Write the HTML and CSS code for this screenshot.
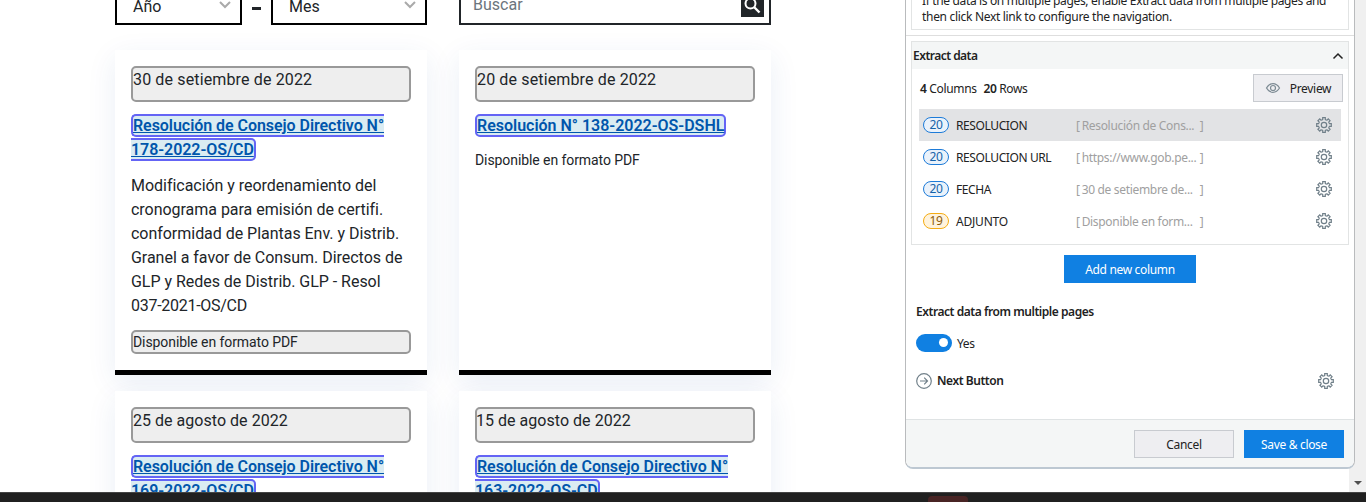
FILE: index.html
```html
<!DOCTYPE html>
<html lang="es">
<head>
<meta charset="utf-8">
<title>Resoluciones</title>
<link rel="stylesheet" href="styles.css">
</head>
<body>
<svg class="defs" width="0" height="0">
  <defs><path id="tooth" d="M5.170-2.140L5.450-1.300H7.300V1.300H5.450L5.170 2.140" fill="none" stroke="currentColor" stroke-width="1.200"/></defs>
  <symbol id="gear" viewBox="-8 -8 16 16">
    <use href="#tooth"/><use href="#tooth" transform="rotate(45)"/><use href="#tooth" transform="rotate(90)"/><use href="#tooth" transform="rotate(135)"/>
    <use href="#tooth" transform="rotate(180)"/><use href="#tooth" transform="rotate(225)"/><use href="#tooth" transform="rotate(270)"/><use href="#tooth" transform="rotate(315)"/>
    <circle r="2.700" fill="none" stroke="currentColor" stroke-width="1.200"/>
  </symbol>
</svg>
<div class="screen">
  <main class="page">
    <div class="filters">
      <div class="select year"><span>Año</span><svg width="12" height="8" viewBox="0 0 12 8"><path d="M1 1l5 5 5-5" fill="none" stroke="#aaa" stroke-width="2"/></svg></div>
      <div class="dash"></div>
      <div class="select month"><span>Mes</span><svg width="12" height="8" viewBox="0 0 12 8"><path d="M1 1l5 5 5-5" fill="none" stroke="#aaa" stroke-width="2"/></svg></div>
      <div class="search"><span>Buscar</span><div class="go"><svg width="23" height="23" viewBox="0 0 23 23"><circle cx="9.500" cy="9.500" r="5" fill="none" stroke="#fff" stroke-width="2"/><path d="M13 13l5.500 5.500" stroke="#fff" stroke-width="2.400"/></svg></div></div>
    </div>
    <div class="cards">
      <article class="card">
        <div class="date">30 de setiembre de 2022</div>
        <h3><a>Resolución de Consejo Directivo N° <br>178-2022-OS/CD</a></h3>
        <p>Modificación y reordenamiento del<br>cronograma para emisión de certifi.<br>conformidad de Plantas Env. y Distrib.<br>Granel a favor de Consum. Directos de<br>GLP y Redes de Distrib. GLP - Resol<br><span class="tight">037-2021-OS/CD</span></p>
        <div class="pdf boxed">Disponible en formato PDF</div>
      </article>
      <article class="card">
        <div class="date">20 de setiembre de 2022</div>
        <h3><a class="wide">Resolución N° 138-2022-OS-DSHL</a></h3>
        <div class="pdf">Disponible en formato PDF</div>
      </article>
      <article class="card">
        <div class="date short">25 de agosto de 2022</div>
        <h3><a>Resolución de Consejo Directivo N° <br>169-2022-OS/CD</a></h3>
      </article>
      <article class="card">
        <div class="date short lead">15 de agosto de 2022</div>
        <h3><a>Resolución de Consejo Directivo N° <br>163-2022-OS-CD</a></h3>
      </article>
    </div>
  </main>
  <div class="scrollbar"><span class="down"></span></div>
  <footer class="taskbar"><span class="tab"></span></footer>
  <section class="panel">
    <div class="body">
      <div class="hint"><div class="h1">If the data is on multiple pages, enable Extract data from multiple pages and</div><div class="h2">then click Next link to configure the navigation.</div></div>
      <div class="extract">
        <header><b>Extract data</b><svg width="12" height="8" viewBox="0 0 12 8"><path d="M1.500 6.500L6 2l4.500 4.500" fill="none" stroke="#222" stroke-width="1.500"/></svg></header>
        <div class="summary"><span class="counts"><b>4</b> Columns <b class="rows">20</b> Rows</span>
          <button class="btn preview"><svg width="16" height="12" viewBox="0 0 16 12"><path d="M1.500 6C5 .2 11 .2 14.500 6 11 11.800 5 11.800 1.500 6z" fill="none" stroke="#7d8b94" stroke-width="1.200"/><circle cx="8" cy="6" r="2.500" fill="none" stroke="#7d8b94" stroke-width="1.200"/></svg><span>Preview</span></button></div>
        <div class="row on"><span class="badge">20</span><span class="name">RESOLUCION</span><span class="val"><i>[</i><em>Resolución de Cons...</em><i>]</i></span><svg class="gear"><use href="#gear"/></svg></div>
        <div class="row"><span class="badge">20</span><span class="name">RESOLUCION URL</span><span class="val"><i>[</i><em>https://www.gob.pe...</em><i>]</i></span><svg class="gear"><use href="#gear"/></svg></div>
        <div class="row"><span class="badge">20</span><span class="name">FECHA</span><span class="val"><i>[</i><em>30 de setiembre de...</em><i>]</i></span><svg class="gear"><use href="#gear"/></svg></div>
        <div class="row"><span class="badge warn">19</span><span class="name adj">ADJUNTO</span><span class="val"><i>[</i><em>Disponible en form...</em><i>]</i></span><svg class="gear"><use href="#gear"/></svg></div>
      </div>
      <button class="btn blue add"><span>Add new column</span></button>
      <b class="multi">Extract data from multiple pages</b>
      <div class="toggle"><span class="switch"></span><span class="yes">Yes</span></div>
      <div class="next"><svg width="16" height="16" viewBox="0 0 16 16"><circle cx="8" cy="8" r="7.300" fill="none" stroke="#71808a" stroke-width="1.200"/><path d="M4 8h7.500M8.200 4.700L11.500 8l-3.300 3.300" fill="none" stroke="#71808a" stroke-width="1.200"/></svg><b>Next Button</b><svg class="gear"><use href="#gear"/></svg></div>
    </div>
    <div class="actions"><button class="btn cancel"><span>Cancel</span></button><button class="btn blue save"><span>Save &amp; close</span></button></div>
  </section>
</div>
</body>
</html>
```
FILE: styles.css
```css
* { box-sizing: border-box; }
body { margin: 0; background: #fff; }
.defs { position: absolute; }
.screen { position: relative; width: 1366px; height: 502px; overflow: hidden; display: grid; grid-template: 492px 10px / 1349px 17px; }
.page { overflow: hidden; padding-left: 115px; font: 16px/24px Roboto, sans-serif; color: #212529; }
.filters { display: flex; width: 656px; height: 25px; }
.select, .search { border: 2px solid #000; border-top: 0; display: flex; justify-content: space-between; }
.select span { line-height: 24px; margin-top: -5px; }
.select svg { margin-top: 1px; }
.year { width: 127px; padding: 0 9px 0 16px; }
.month { width: 156px; padding: 0 9px 0 16px; }
.dash { width: 9px; height: 3px; background: #212529; margin: 7px 10px 0; }
.search { border-color: #212529; width: 312px; margin-left: 32px; padding: 0 5px 0 12px; color: #6c757d; }
.search span { margin-top: -7px; }
.go { width: 23px; height: 23px; background: #212529; margin-top: -6px; }
.go svg { display: block; }
.cards { display: grid; grid-template-columns: 312px 312px; grid-template-rows: 325px 325px; gap: 16px 32px; margin-top: 25px; }
.card { background: #fff; border-bottom: 5px solid #000; padding: 16px; box-shadow: 0 8px 28px rgba(0, 75, 150, .085); }
.date { height: 36px; border: 2px solid #999; border-radius: 5px; background: #eee; letter-spacing: .14px; line-height: 24px; }
.short { letter-spacing: .03px; }
.lead { text-indent: -1px; }
.card h3 { margin: 12px 0; font-size: 16px; font-weight: 600; line-height: 24px; white-space: nowrap; letter-spacing: -.05px; }
.card a { color: #0056ac; text-decoration: underline; background: #daecf2; border: 2px solid #6464f5; border-radius: 5px; }
.card .wide { letter-spacing: -.01px; }
.card p { margin: 0 0 12px; white-space: nowrap; letter-spacing: -.03px; }
.card .tight { letter-spacing: -.28px; }
.pdf { font-size: 14px; line-height: 20px; letter-spacing: -.08px; }
.boxed { height: 24px; border: 2px solid #999; border-radius: 5px; background: #eee; }
.scrollbar { background: #f0f0f0; display: flex; justify-content: center; align-items: flex-end; }
.down { border: 4px solid transparent; border-top-color: #505050; border-bottom: 0; margin-bottom: 7px; }
.taskbar { grid-column: 1 / 3; background: #202020; border-top: 1px solid #444; padding: 3px 0 0 928px; }
.tab { display: block; width: 40px; height: 8px; border-radius: 4px 4px 0 0; background: #482424; }
.panel { position: absolute; left: 905px; top: 0; width: 450px; height: 469px; display: flex; flex-direction: column; background: #fff; border: 1px solid #b9bbbd; border-top: 0; border-radius: 0 0 8px 8px; border-bottom: 2px solid #bdc8d2; overflow: hidden; font: 12px/16px "Noto Sans", sans-serif; letter-spacing: -.32px; color: #222; }
.panel b { font-weight: 600; letter-spacing: -.45px; }
.body { height: 419px; display: flex; flex-direction: column; }
.hint { height: 30px; flex: none; margin: 0 5px; border: 1px solid #e2e4e4; border-top: 0; padding-left: 10px; white-space: nowrap; overflow: hidden; letter-spacing: -.35px; }
.h1 { margin-top: -7px; }
.h2 { letter-spacing: -.31px; }
.extract { margin-top: 11px; width: 438px; height: 204px; margin-left: 5px; border: 1px solid #e2e4e4; position: relative; flex: none; }
.extract::before { content: ""; position: absolute; left: -6px; top: -7px; width: 450px; height: 1px; background: #dedede; }
.extract header { height: 27px; background: #f4f6f6; display: flex; justify-content: space-between; align-items: center; padding: 1px 4px 0 1px; }
.extract header b { letter-spacing: -.52px; }
.summary { height: 40px; display: flex; justify-content: space-between; padding: 5px 5px 0 8px; }
.counts { margin-top: 7px; }
.rows { margin-left: 4px; }
.btn { font: inherit; letter-spacing: inherit; color: #222; border: 1px solid #c8cbd0; background: #eeeef1; height: 28px; padding: 0; display: flex; align-items: center; justify-content: center; }
.btn span { padding-top: 2px; }
.preview { width: 90px; gap: 9px; }
.row { height: 32px; margin: 0 7px; padding: 0 9px 0 4px; display: flex; align-items: center; }
.on { background: #e2e3e5; }
.badge { width: 26px; height: 16px; border: 1px solid #1d7bd8; border-radius: 8px; background: #eaf2fb; color: #1763a8; line-height: 14px; text-align: center; }
.warn { border-color: #f5ac13; background: #fff3dc; color: #8b5a0b; }
.name { width: 120px; margin-left: 7px; padding-top: 2px; letter-spacing: -.4px; }
.adj { letter-spacing: -.2px; }
.val { width: 128px; display: flex; color: #a0a0a0; padding-top: 2px; }
.val i { font-style: normal; }
.val em { font-style: normal; width: 120px; padding-left: 2px; }
.gear { width: 16px; height: 16px; margin-left: auto; color: #71808a; }
.blue { background: #1080e2; border-color: #1080e2; color: #fff; }
.add { width: 132px; margin: 10px 0 0 158px; flex: none; }
.multi { margin: 21px 0 0 10px; }
.toggle { display: flex; align-items: center; gap: 5px; margin: 14px 0 0 10px; height: 18px; }
.yes { padding-top: 2px; }
.switch { width: 36px; height: 18px; border-radius: 9px; background: #1080e2; padding: 4px 4px 0 23px; }
.switch::after { content: ""; display: block; width: 9px; height: 9px; border-radius: 50%; background: #fff; }
.next { display: flex; align-items: center; gap: 5px; margin: 20px 20px 0 10px; height: 18px; }
.actions { flex: 1; background: #f4f6f6; border-top: 1px solid #dfe3e4; display: flex; justify-content: flex-end; gap: 10px; padding: 10px 10px 0; }
.cancel, .save { width: 100px; }
```
